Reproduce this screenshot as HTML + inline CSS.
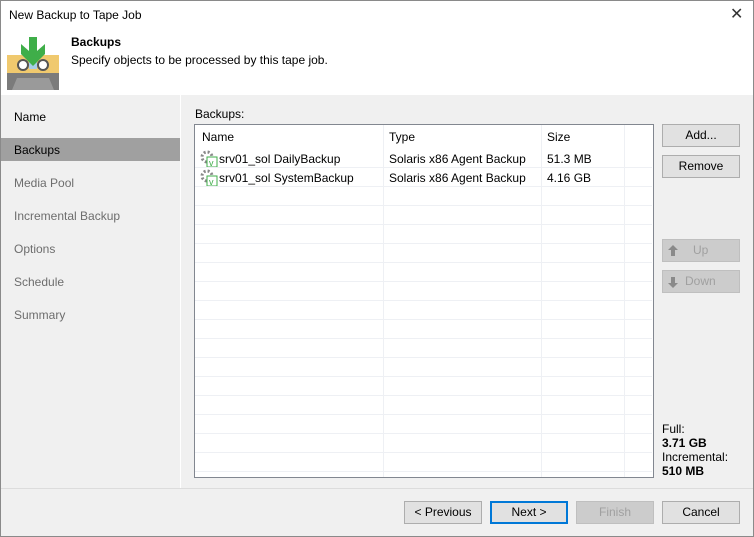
<!DOCTYPE html>
<html><head><style>
*{margin:0;padding:0;box-sizing:border-box}
body{width:754px;height:537px;background:#f0f0f0;font-family:"Liberation Sans",sans-serif;font-size:12px;color:#000;position:relative;overflow:hidden}
.a{position:absolute}
.btn{position:absolute;background:#e1e1e1;border:1px solid #adadad;text-align:center;line-height:21px;font-size:12px}
.dis{background:#cccccc;border-color:#bfbfbf;color:#a0a0a0}
.nav{position:absolute;left:14px;color:#6d6d6d}
.hl{position:absolute;left:195px;width:457px;height:1px;background:#eef0f4}
.vl{position:absolute;width:1px;background:#eef0f4}
</style></head><body>
<div class="a" style="left:0;top:0;width:754px;height:537px;border:1px solid #8a8a8a"></div>
<div class="a" style="left:1px;top:1px;width:752px;height:94px;background:#fff"></div>
<div class="a" style="left:9px;top:8px;font-size:12px">New Backup to Tape Job</div>
<div class="a" style="left:730px;top:4px;font-size:16px;color:#333">✕</div>
<svg class="a" style="left:7px;top:36px" width="52" height="54" viewBox="0 0 52 54">
<rect x="0" y="19" width="52" height="18" fill="#f0c96e"/>
<rect x="0" y="37" width="52" height="17" fill="#7b7b7b"/>
<polygon points="5,54 10,42 42,42 47,54" fill="#9a9a9a"/>
<circle cx="16" cy="29" r="5" fill="#fff" stroke="#555" stroke-width="2"/>
<circle cx="36" cy="29" r="5" fill="#fff" stroke="#555" stroke-width="2"/>
<rect x="22" y="26" width="8" height="7" fill="#a8cde8"/>
<polygon points="22,1 30,1 30,15 38,8 38,18 26,30 14,18 14,8 22,15" fill="#3fae49"/>
</svg>
<div class="a" style="left:71px;top:35px;font-weight:bold">Backups</div>
<div class="a" style="left:71px;top:53px">Specify objects to be processed by this tape job.</div>
<div class="a" style="left:180px;top:95px;width:1px;height:393px;background:#fff"></div>
<div class="nav" style="top:110px;color:#000">Name</div>
<div class="a" style="left:1px;top:138px;width:179px;height:23px;background:#a0a0a0"></div>
<div class="nav" style="top:143px;color:#000">Backups</div>
<div class="nav" style="top:176px">Media Pool</div>
<div class="nav" style="top:209px">Incremental Backup</div>
<div class="nav" style="top:242px">Options</div>
<div class="nav" style="top:275px">Schedule</div>
<div class="nav" style="top:308px">Summary</div>
<div class="a" style="left:195px;top:107px">Backups:</div>
<div class="a" style="left:194px;top:124px;width:460px;height:354px;background:#fff;border:1px solid #828790"></div>
<div class="vl" style="left:383px;top:125px;height:352px"></div>
<div class="vl" style="left:541px;top:125px;height:352px"></div>
<div class="vl" style="left:624px;top:125px;height:352px"></div>
<div class="a" style="left:202px;top:130px">Name</div>
<div class="a" style="left:389px;top:130px">Type</div>
<div class="a" style="left:547px;top:130px">Size</div>
<div class="hl" style="top:167px"></div><div class="hl" style="top:186px"></div><div class="hl" style="top:205px"></div><div class="hl" style="top:224px"></div><div class="hl" style="top:243px"></div><div class="hl" style="top:262px"></div><div class="hl" style="top:281px"></div><div class="hl" style="top:300px"></div><div class="hl" style="top:319px"></div><div class="hl" style="top:338px"></div><div class="hl" style="top:357px"></div><div class="hl" style="top:376px"></div><div class="hl" style="top:395px"></div><div class="hl" style="top:414px"></div><div class="hl" style="top:433px"></div><div class="hl" style="top:452px"></div><div class="hl" style="top:471px"></div>
<svg class="a" style="left:200px;top:150px" width="18" height="17"><circle cx="7" cy="7" r="5" fill="none" stroke="#888" stroke-width="3" stroke-dasharray="2 2"/><rect x="7" y="7" width="10" height="10" fill="#fff" stroke="#3fae49"/><text x="9" y="16" font-size="9" fill="#3fae49" font-family="Liberation Sans">v</text></svg>
<div class="a" style="left:219px;top:152px">srv01_sol DailyBackup</div>
<div class="a" style="left:389px;top:152px">Solaris x86 Agent Backup</div>
<div class="a" style="left:547px;top:152px">51.3 MB</div>
<svg class="a" style="left:200px;top:169px" width="18" height="17"><circle cx="7" cy="7" r="5" fill="none" stroke="#888" stroke-width="3" stroke-dasharray="2 2"/><rect x="7" y="7" width="10" height="10" fill="#fff" stroke="#3fae49"/><text x="9" y="16" font-size="9" fill="#3fae49" font-family="Liberation Sans">v</text></svg>
<div class="a" style="left:219px;top:171px">srv01_sol SystemBackup</div>
<div class="a" style="left:389px;top:171px">Solaris x86 Agent Backup</div>
<div class="a" style="left:547px;top:171px">4.16 GB</div>
<div class="btn" style="left:662px;top:124px;width:78px;height:23px">Add...</div>
<div class="btn" style="left:662px;top:155px;width:78px;height:23px">Remove</div>
<div class="btn dis" style="left:662px;top:239px;width:78px;height:23px;text-align:left"><svg class="a" style="left:5px;top:5px" width="10" height="11"><polygon points="5,0 10,5 7,5 7,11 3,11 3,5 0,5" fill="#8a8a8a"/></svg><span class="a" style="left:30px;top:0">Up</span></div>
<div class="btn dis" style="left:662px;top:270px;width:78px;height:23px;text-align:left"><svg class="a" style="left:5px;top:6px" width="10" height="11"><polygon points="5,11 10,6 7,6 7,0 3,0 3,6 0,6" fill="#8a8a8a"/></svg><span class="a" style="left:22px;top:0">Down</span></div>
<div class="a" style="left:662px;top:422px;line-height:14px">Full:<br><b>3.71 GB</b><br>Incremental:<br><b>510 MB</b></div>
<div class="a" style="left:1px;top:488px;width:752px;height:1px;background:#dcdcdc"></div>
<div class="btn" style="left:404px;top:501px;width:78px;height:23px">&lt; Previous</div>
<div class="btn" style="left:490px;top:501px;width:78px;height:23px;border:2px solid #0078d7;line-height:19px">Next &gt;</div>
<div class="btn dis" style="left:576px;top:501px;width:78px;height:23px">Finish</div>
<div class="btn" style="left:662px;top:501px;width:78px;height:23px">Cancel</div>
</body></html>
